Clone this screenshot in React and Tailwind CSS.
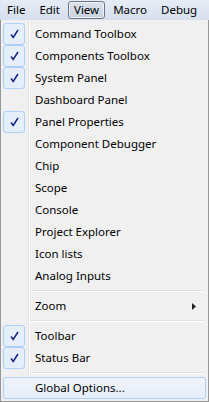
import React from "react";

const items = [
  { label: "Command Toolbox", checked: true },
  { label: "Components Toolbox", checked: true },
  { label: "System Panel", checked: true },
  { label: "Dashboard Panel" },
  { label: "Panel Properties", checked: true },
  { label: "Component Debugger" },
  { label: "Chip" },
  { label: "Scope" },
  { label: "Console" },
  { label: "Project Explorer" },
  { label: "Icon lists" },
  { label: "Analog Inputs" },
  { sep: true },
  { label: "Zoom", sub: true },
  { sep: true },
  { label: "Toolbar", checked: true },
  { label: "Status Bar", checked: true },
  { sep: true },
  { label: "Global Options...", hover: true },
];

const Check = () => (
  <div className="w-[22px] h-[22px] shrink-0 rounded-[3px] border border-[#aecff7] bg-[#e6eef9] flex items-center justify-center">
    <svg width="9" height="10" viewBox="0 0 9 10">
      <path d="M1 5.5 L3.2 8.5 L8 1" fill="none" stroke="#14208a" strokeWidth="1.5" />
    </svg>
  </div>
);

const App = () => {
  return (
    <div className="w-[209px] h-[402px] bg-[#f0f0f0] text-[11.5px] text-black overflow-hidden" style={{ fontFamily: '"Noto Sans", "DejaVu Sans", sans-serif' }}>
      <div className="h-[20px] flex items-center bg-gradient-to-b from-[#e6ecf6] to-[#d6dfee]">
        {["File", "Edit", "View", "Macro", "Debug"].map((m) => (
          <div
            key={m}
            className={
              m === "View"
                ? "h-[18px] px-[5px] flex items-center rounded-[3px] border border-[#6b7686] bg-gradient-to-b from-[#dde3ec] to-[#c9d1dd] shadow-[inset_0_0_0_1px_#eef2f8] mx-[1px]"
                : "h-[18px] px-[7px] flex items-center"
            }
          >
            {m}
          </div>
        ))}
      </div>
      <div className="relative h-[382px] border-x border-b border-[#979797] bg-[#f0f0f0] pt-[3px] px-[2px] flex flex-col">
        <div className="absolute left-[27px] top-0 bottom-0 w-[1px] bg-[#e2e3e3]" />
        <div className="absolute left-[28px] top-0 bottom-0 w-[1px] bg-white" />
        {items.map((it, i) =>
          it.sep ? (
            <div key={i} className="ml-[27px] mr-[1px] my-[3px] h-[2px] border-t border-[#e0e0e0] border-b border-b-white" />
          ) : (
            <div
              key={i}
              className={
                it.hover
                  ? "relative h-[22px] flex items-center rounded-[3px] shadow-[inset_0_0_0_1px_#aecff7] bg-gradient-to-b from-[#f1f5fb] to-[#e5edf8]"
                  : "relative h-[22px] flex items-center"
              }
            >
              {it.checked ? <Check /> : <div className="w-[22px] shrink-0" />}
              <span className="ml-[10px]">{it.label}</span>
              {it.sub && (
                <svg className="ml-auto mr-[10px]" width="4" height="7" viewBox="0 0 4 7">
                  <path d="M0 0 L4 3.5 L0 7 Z" fill="#222" />
                </svg>
              )}
            </div>
          )
        )}
      </div>
    </div>
  );
};

export default App;
